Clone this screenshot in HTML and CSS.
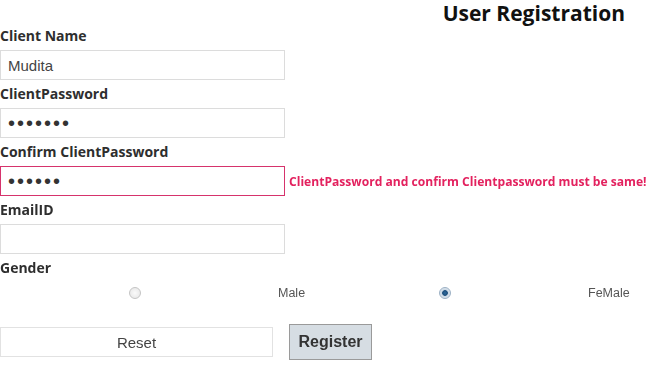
FILE: index.html
```html
<!DOCTYPE html>
<html lang="en">
<head>
    <meta charset="UTF-8">
    <title>User Registration</title>
    <link rel="stylesheet" href="styles.css">
</head>
<body>
    <div class="page">
        <h1 class="title">User Registration</h1>

        <form class="form">
            <div class="field">
                <label class="field-label">Client Name</label>
                <div class="field-row">
                    <input class="text-input" type="text" value="Mudita">
                </div>
            </div>

            <div class="field">
                <label class="field-label">ClientPassword</label>
                <div class="field-row">
                    <input class="text-input" type="password" value="1234567">
                </div>
            </div>

            <div class="field">
                <label class="field-label">Confirm ClientPassword</label>
                <div class="field-row">
                    <input class="text-input invalid" type="password" value="123456" autofocus>
                    <span class="error">ClientPassword and confirm Clientpassword must be same!</span>
                </div>
            </div>

            <div class="field">
                <label class="field-label">EmailID</label>
                <div class="field-row">
                    <input class="text-input" type="text">
                </div>
            </div>

            <div class="field">
                <label class="field-label">Gender</label>
                <div class="gender-list">
                    <input class="radio" type="radio" name="gender" id="male">
                    <label class="radio-label" for="male">Male</label>
                    <input class="radio" type="radio" name="gender" id="female" checked>
                    <label class="radio-label" for="female">FeMale</label>
                </div>
            </div>

            <div class="actions">
                <button class="btn-reset" type="reset">Reset</button>
                <button class="btn-register" type="button">Register</button>
            </div>
        </form>
    </div>
</body>
</html>
```

FILE: styles.css
```css
* {
    margin: 0;
    padding: 0;
    box-sizing: border-box;
}

body {
    font-family: 'Open Sans', 'Liberation Sans', sans-serif;
    background: #fff;
    color: #333;
}

.page {
    width: 650px;
}

.title {
    font-size: 21px;
    line-height: 26px;
    font-weight: 700;
    color: #111;
    text-align: right;
    padding-right: 25px;
}

.form {
    display: flex;
    flex-direction: column;
    gap: 4px;
}

.field {
    display: flex;
    flex-direction: column;
    gap: 4px;
}

.field-label {
    font-size: 14px;
    line-height: 20px;
    font-weight: 700;
    color: #2e2e2e;
}

.field-row {
    display: flex;
    align-items: center;
    gap: 4px;
}

.text-input {
    width: 285px;
    height: 30px;
    border: 1px solid #dcdcdc;
    padding: 0 7px;
    font-family: 'Liberation Sans', Arial, sans-serif;
    font-size: 15px;
    color: #444;
    outline: none;
    background: #fff;
    caret-color: #000;
}

.text-input[type="password"] {
    font-size: 20px;
    color: #333;
    letter-spacing: 2px;
}

.text-input.invalid {
    border-color: #d6336c;
}

.error {
    font-size: 12.1px;
    font-weight: 700;
    color: #e3225f;
    white-space: nowrap;
}

.gender-list {
    display: grid;
    grid-template-columns: 270px 40px 270px 1fr;
    align-items: center;
    height: 26px;
    margin-top: -2px;
}

.radio {
    appearance: none;
    -webkit-appearance: none;
    justify-self: center;
    width: 12px;
    height: 12px;
    border-radius: 50%;
    border: 1px solid #c4c4c4;
    background: radial-gradient(circle, #fafafa 0%, #e4e4e4 100%);
}

.radio:checked {
    border-color: #9bb0c4;
    background: radial-gradient(circle, #2f6a9c 0%, #1d4f7d 35%, #c9d7e4 45%, #eef2f6 100%);
}

.radio-label {
    font-family: 'Liberation Sans', Arial, sans-serif;
    font-size: 12.5px;
    color: #555;
    padding-left: 8px;
}

.actions {
    display: flex;
    align-items: center;
    gap: 16px;
    margin-top: 14px;
}

.btn-reset {
    width: 273px;
    height: 30px;
    border: 1px solid #e2e2e2;
    background: #fff;
    font-family: 'Liberation Sans', Arial, sans-serif;
    font-size: 15px;
    color: #444;
}

.btn-register {
    width: 83px;
    height: 36px;
    border: 1px solid #9a9a9a;
    background: #d6dde3;
    font-family: 'Liberation Sans', Arial, sans-serif;
    font-size: 16px;
    font-weight: 700;
    color: #333;
}
```
